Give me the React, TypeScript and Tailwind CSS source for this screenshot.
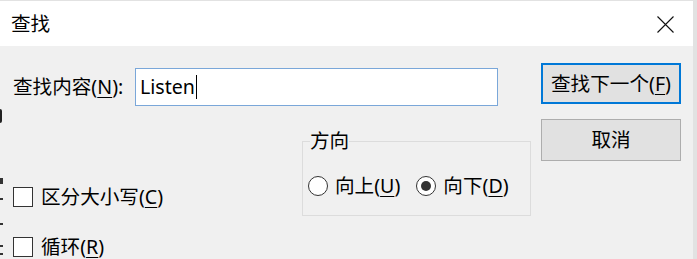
import React from "react";

const font = { fontFamily: '"Noto Sans", "Noto Sans CJK SC", sans-serif' };

function U({ children }: { children: React.ReactNode }) {
  return <span className="underline decoration-1 underline-offset-[3px]">{children}</span>;
}

function Checkbox({ label }: { label: React.ReactNode }) {
  return (
    <div className="flex h-[20px] items-center">
      <div className="h-[20px] w-[20px] border border-[#333333] bg-white" />
      <span className="ml-[8px] leading-[22px]">{label}</span>
    </div>
  );
}

function Radio({ label, checked }: { label: React.ReactNode; checked?: boolean }) {
  return (
    <div className="flex h-[20px] items-center">
      <div className="flex h-[20px] w-[20px] items-center justify-center rounded-full border-[1.5px] border-[#333333] bg-white">
        {checked && <div className="h-[10px] w-[10px] rounded-full bg-[#333333]" />}
      </div>
      <span className="ml-[7px] leading-[22px]">{label}</span>
    </div>
  );
}

export default function App() {
  return (
    <div
      className="relative h-[259px] w-[697px] overflow-hidden border-r-[4px] border-t border-[#e2e2e2] bg-[#f0f0f0] text-[19.6px] text-black"
      style={font}
    >
      {/* title bar */}
      <div className="flex h-[45px] items-center justify-between bg-white pl-[11px] pr-[19px]">
        <span className="leading-[22px]">查找</span>
        <svg width="17" height="17" viewBox="0 0 17 17" className="mt-[1px]">
          <path d="M0.5 0.5 L16.5 16.5 M16.5 0.5 L0.5 16.5" stroke="#111" strokeWidth="1.1" fill="none" />
        </svg>
      </div>

      {/* body */}
      <div className="flex">
        <div className="flex w-[531px] flex-col pl-[13px] pt-[22px]">
          <div className="flex h-[38px] items-center">
            <span className="w-[122px] leading-[22px]">
              查找内容(<U>N</U>):
            </span>
            <div className="flex h-[38px] w-[363px] items-center border border-[#7aa7d9] bg-white pl-[4px]">
              <span className="leading-[22px]">Listen</span>
              <span className="ml-[1px] h-[24px] w-px bg-black" />
            </div>
          </div>

          <div className="mt-[24px] flex">
            <div className="flex w-[289px] flex-col gap-[30px] pt-[57px]">
              <Checkbox label={<>区分大小写(<U>C</U>)</>} />
              <Checkbox label={<>循环(<U>R</U>)</>} />
            </div>
            <fieldset className="h-[86px] w-[229px] border border-[#dcdcdc] px-[5px]">
              <legend className="ml-[2px] px-0 leading-[22px]">方向</legend>
              <div className="mt-[24px] flex items-center gap-[16px]">
                <Radio label={<>向上(<U>U</U>)</>} />
                <Radio label={<>向下(<U>D</U>)</>} checked />
              </div>
            </fieldset>
          </div>
        </div>

        <div className="ml-[10px] flex flex-col pt-[17px]">
          <button className="flex h-[41px] w-[140px] items-center justify-center border-2 border-[#0078d7] bg-[#e1e1e1] leading-[22px]">
            查找下一个(<U>F</U>)
          </button>
          <button className="mt-[15px] flex h-[42px] w-[140px] items-center justify-center border border-[#adadad] bg-[#e1e1e1] leading-[22px]">
            取消
          </button>
        </div>
      </div>

      {/* fragments of the window behind, at the left edge */}
      <div className="absolute left-0 top-[108px] h-[14px] w-[2px] rounded-r bg-[#222]" />
      <div className="absolute left-0 top-[177px] h-[6px] w-[3px] bg-[#333]" />
      <div className="absolute left-0 top-[197px] h-[2px] w-[3px] bg-[#333]" />
      <div className="absolute left-0 top-[222px] h-[2px] w-[3px] bg-[#333]" />
      <div className="absolute left-0 top-[244px] h-[2px] w-[3px] bg-[#333]" />
      <div className="absolute left-0 top-[252px] h-[2px] w-[3px] bg-[#333]" />
    </div>
  );
}
